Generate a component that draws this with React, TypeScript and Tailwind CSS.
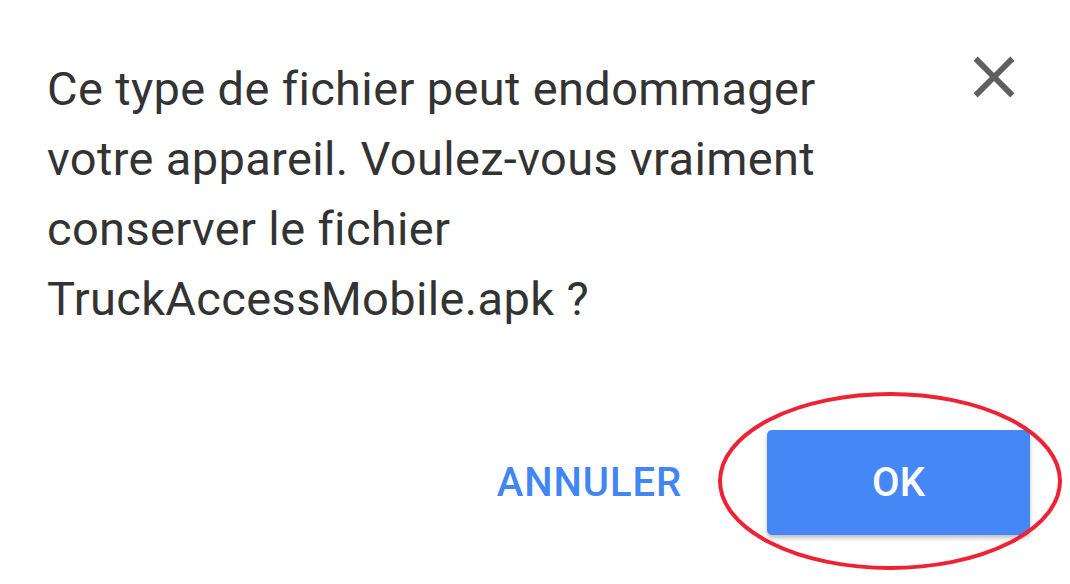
import React from 'react';

function CloseIcon() {
  return (
    <svg width="70" height="70" viewBox="0 0 24 24" fill="#5f5f5f">
      <path d="M19 6.41L17.59 5 12 10.59 6.41 5 5 6.41 10.59 12 5 17.59 6.41 19 12 13.41 17.59 19 19 17.59 13.41 12z" />
    </svg>
  );
}

export default function App() {
  return (
    <div
      className="relative w-[1070px] h-[584px] bg-white overflow-hidden"
      style={{ fontFamily: 'Roboto, "Noto Sans", sans-serif' }}
    >
      {/* Header: message + close */}
      <div className="flex items-start justify-between pl-[47px] pt-[42px] pr-[41px]">
        <p className="mt-[12px] text-[47px] leading-[70px] tracking-[0.35px] text-[#333333] whitespace-nowrap">
          Ce type de fichier peut endommager
          <br />
          votre appareil. Voulez-vous vraiment
          <br />
          conserver le fichier
          <br />
          TruckAccessMobile.apk ?
        </p>
        <button className="shrink-0" aria-label="Fermer">
          <CloseIcon />
        </button>
      </div>

      {/* Actions */}
      <div className="flex items-center justify-end gap-[85px] pr-[40px] mt-[96px]">
        <button className="text-[40px] font-medium text-[#4285f4] tracking-[0.9px]">ANNULER</button>
        <button className="w-[263px] h-[105px] rounded-[5px] bg-[#4587f4] text-white text-[40px] font-medium shadow-[0_3px_4px_rgba(0,0,0,0.25)]">
          OK
        </button>
      </div>

      {/* Red annotation circle */}
      <svg
        className="absolute left-[714px] top-[389px] pointer-events-none"
        width="352"
        height="184"
        viewBox="0 0 352 184"
      >
        <ellipse cx="176" cy="92" rx="170" ry="87" fill="none" stroke="#ee2233" strokeWidth="4" />
      </svg>
    </div>
  );
}
